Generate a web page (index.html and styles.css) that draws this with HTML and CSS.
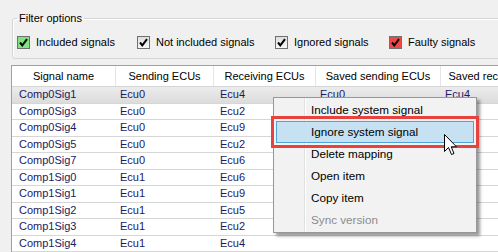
FILE: index.html
```html
<!DOCTYPE html>
<html lang="en">

<head>
    <meta charset="UTF-8">
    <meta name="viewport" content="width=device-width, initial-scale=1.0">
    <title>Signal Mapping</title>
    <link rel="stylesheet" href="styles.css">
</head>

<body>
    <div class="window">
        <fieldset class="filter-box">
            <legend>Filter options</legend>
            <div class="filter-list">
                <label class="filter-item">
                    <span class="check check-green"><svg viewBox="0 0 11 11"><path d="M2 5.5 L4.3 8.3 L9 2.2"/></svg></span>
                    Included signals
                </label>
                <label class="filter-item">
                    <span class="check"><svg viewBox="0 0 11 11"><path d="M2 5.5 L4.3 8.3 L9 2.2"/></svg></span>
                    Not included signals
                </label>
                <label class="filter-item">
                    <span class="check"><svg viewBox="0 0 11 11"><path d="M2 5.5 L4.3 8.3 L9 2.2"/></svg></span>
                    Ignored signals
                </label>
                <label class="filter-item">
                    <span class="check check-red"><svg viewBox="0 0 11 11"><path d="M2 5.5 L4.3 8.3 L9 2.2"/></svg></span>
                    Faulty signals
                </label>
            </div>
        </fieldset>

        <div class="signal-list">
            <div class="list-header">
                <div>Signal name</div>
                <div>Sending ECUs</div>
                <div>Receiving ECUs</div>
                <div>Saved sending ECUs</div>
                <div>Saved receiving ECUs</div>
            </div>
            <div class="list-row selected">
                <div>Comp0Sig1</div><div>Ecu0</div><div>Ecu4</div><div>Ecu0</div><div>Ecu4</div>
            </div>
            <div class="list-row">
                <div>Comp0Sig3</div><div>Ecu0</div><div>Ecu2</div><div></div><div></div>
            </div>
            <div class="list-row">
                <div>Comp0Sig4</div><div>Ecu0</div><div>Ecu9</div><div></div><div></div>
            </div>
            <div class="list-row">
                <div>Comp0Sig5</div><div>Ecu0</div><div>Ecu2</div><div></div><div></div>
            </div>
            <div class="list-row">
                <div>Comp0Sig7</div><div>Ecu0</div><div>Ecu6</div><div></div><div></div>
            </div>
            <div class="list-row">
                <div>Comp1Sig0</div><div>Ecu1</div><div>Ecu6</div><div></div><div></div>
            </div>
            <div class="list-row">
                <div>Comp1Sig1</div><div>Ecu1</div><div>Ecu9</div><div></div><div></div>
            </div>
            <div class="list-row">
                <div>Comp1Sig2</div><div>Ecu1</div><div>Ecu5</div><div></div><div></div>
            </div>
            <div class="list-row">
                <div>Comp1Sig3</div><div>Ecu1</div><div>Ecu2</div><div></div><div></div>
            </div>
            <div class="list-row">
                <div>Comp1Sig4</div><div>Ecu1</div><div>Ecu4</div><div></div><div></div>
            </div>
        </div>
    </div>

    <!-- right-click menu over the list -->
    <ul class="context-menu">
        <li>Include system signal</li>
        <li class="active">Ignore system signal</li>
        <li>Delete mapping</li>
        <li>Open item</li>
        <li>Copy item</li>
        <li class="disabled">Sync version</li>
    </ul>

    <svg class="cursor" width="13" height="22" viewBox="0 0 13 22">
        <path d="M0.5 0.5 V17.5 L4.5 13.5 L7.5 20.5 L10 19.5 L7.2 12.8 H12.5 Z" fill="#fff" stroke="#000" stroke-width="1" stroke-linejoin="miter"/>
    </svg>
</body>

</html>
```

FILE: styles.css
```css
html,
body {
    margin: 0;
    overflow: hidden;
}

body {
    position: relative;
    width: 498px;
    height: 252px;
    background-color: #f0f0f0;
    font-family: "Liberation Sans", Arial, sans-serif;
    font-size: 11px;
    color: #000;
}

.window {
    padding: 11px 0 0 11px;
}

.filter-box {
    width: 540px;
    min-width: 0;
    margin: 0 0 6px 1px;
    padding: 10px 0 9px 4px;
    border: 1px solid #d5d5d5;
    border-radius: 3px;
    box-shadow: inset 1px 1px 0 #fff;
}

.filter-box legend {
    padding: 0 2px;
    line-height: 14px;
}

.filter-list {
    display: grid;
    grid-template-columns: 120px 138px 114px auto;
}

.filter-item {
    display: flex;
    align-items: center;
    line-height: 14px;
}

.check {
    display: inline-flex;
    align-items: center;
    justify-content: center;
    box-sizing: border-box;
    width: 13px;
    height: 13px;
    margin-right: 6px;
    border: 1px solid #707070;
    background: linear-gradient(#dedede, #f8f8f8);
}

.check svg {
    width: 11px;
    height: 11px;
}

.check path {
    fill: none;
    stroke: #000;
    stroke-width: 2;
}

.check-green {
    background: #80e280;
}

.check-red {
    background: #f04646;
}

.signal-list {
    width: 600px;
    border: 1px solid #a0a0a0;
    border-right: none;
    background-color: white;
}

.list-header,
.list-row {
    display: grid;
    grid-template-columns: 104px 98px 102px 125px 126px;
}

.list-header {
    height: 21px;
    box-sizing: border-box;
    border-bottom: 1px solid #d5d5d5;
}

.list-header div {
    line-height: 20px;
    text-align: center;
    white-space: nowrap;
    overflow: hidden;
    border-right: 1px solid #e5e5e5;
}

.list-row {
    height: 16.5px;
    box-sizing: border-box;
    align-items: center;
    border-bottom: 1px solid #d6d6d6;
    color: #1a1a62;
}

.list-row div {
    padding-left: 4px;
    line-height: 15px;
}

.list-row div:first-child {
    padding-left: 7px;
}

.list-row div:nth-child(3) {
    padding-left: 6px;
}

.list-row.selected {
    background: linear-gradient(#ececec, #dcdcdc);
}

.context-menu {
    position: absolute;
    left: 273px;
    top: 97px;
    width: 204px;
    height: 136px;
    box-sizing: border-box;
    margin: 0;
    padding: 1px 2px;
    list-style: none;
    border: 1px solid #979797;
    background:
        linear-gradient(to right, transparent 30px, #e0e0e0 30px, #e0e0e0 31px, #fff 31px, #fff 32px, transparent 32px),
        #f2f2f2;
    box-shadow: 3px 3px 3px rgba(0, 0, 0, 0.4);
    font-size: 11.7px;
}

.context-menu li {
    height: 22px;
    box-sizing: border-box;
    padding-left: 34px;
    line-height: 20px;
    border: 1px solid transparent;
}

.context-menu li.active {
    border-color: #4fa3d8;
    background-color: #c6e1f1;
    outline: 3px solid #e8423f;
    outline-offset: 2px;
}

.context-menu li.disabled {
    color: #8c8c8c;
}

.cursor {
    position: absolute;
    left: 444px;
    top: 134px;
}
```
